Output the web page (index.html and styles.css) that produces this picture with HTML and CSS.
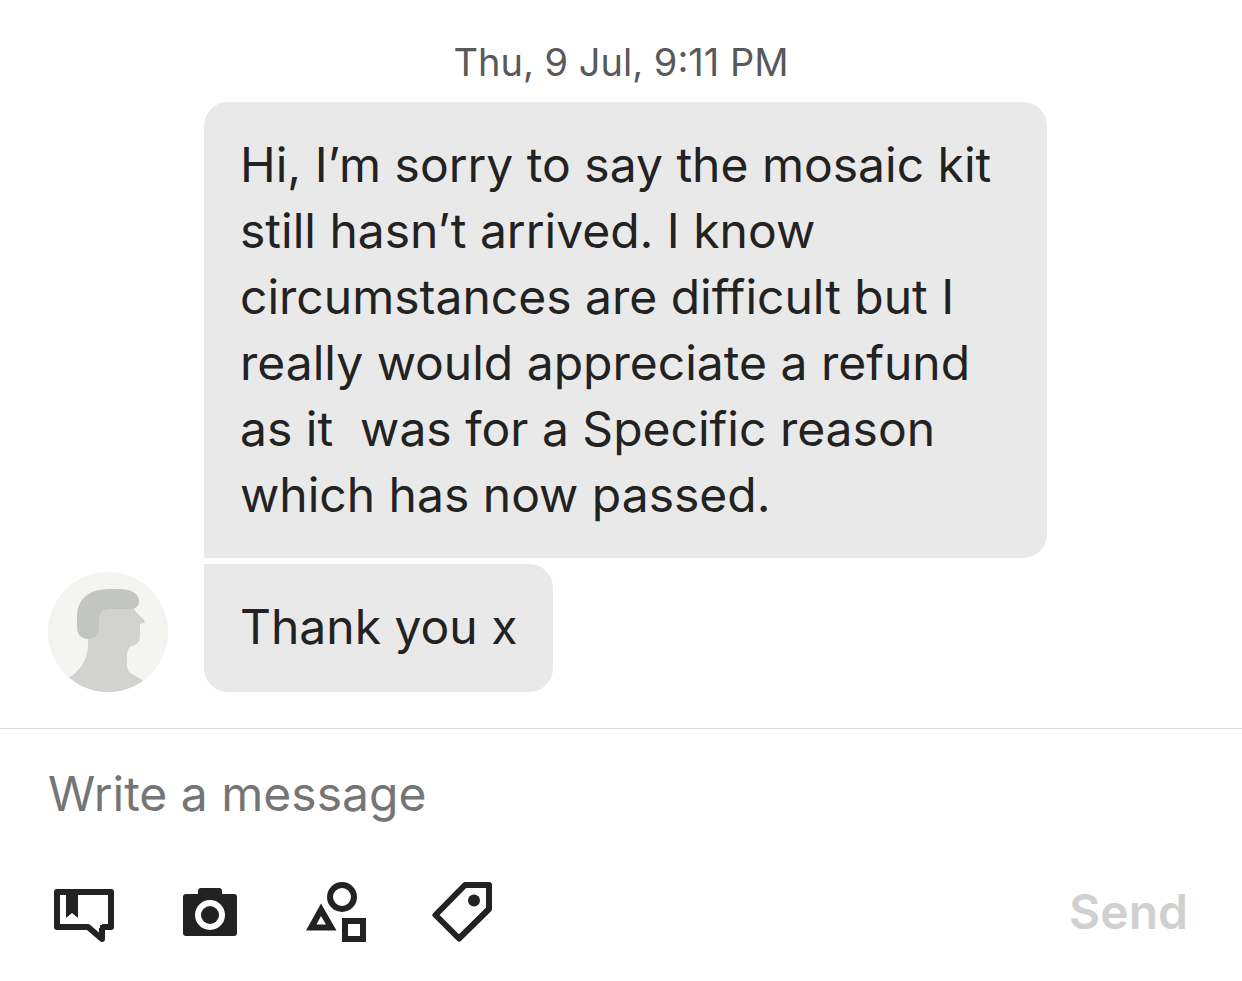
FILE: index.html
```html
<!DOCTYPE html>
<html lang="en">
<head>
<meta charset="utf-8">
<meta name="viewport" content="width=device-width, initial-scale=1">
<title>Conversation</title>
<link rel="stylesheet" href="styles.css">
</head>
<body>
<main class="thread">
  <time class="date">Thu, 9 Jul, 9:11 PM</time>
  <div class="group">
    <svg class="avatar" viewBox="0 0 120 120" role="img" aria-label="Sender">
      <defs><clipPath id="disc"><circle cx="60" cy="60" r="60"/></clipPath></defs>
      <g clip-path="url(#disc)">
        <rect width="120" height="120" fill="#f4f5f1"/>
        <path fill="#d2d3d1" d="M40 36H86Q87 40 90 42L96 48Q98 51 95 51L92 52V64Q92 73 83 74Q79 77 79 84V94Q79 99 84 102L96 109V120H22V105Q40 93 40 72Z"/>
        <path fill="#c3c5c0" d="M61 17H72C84 17 91 22 91 29C91 35 87 37 82 37H62C53 37 51 42 51 48V56C51 63 46 67 40 67C33 67 29 62 29 55V45C29 28 40 17 61 17Z"/>
      </g>
    </svg>
    <div class="bubbles">
      <p class="bubble">Hi, I’m sorry to say the mosaic kit still hasn’t arrived. I know circumstances are difficult but I really would appreciate a refund as it  was for a Specific reason which has now passed.</p>
      <p class="bubble bubble-last">Thank you x</p>
    </div>
  </div>
</main>
<form class="composer">
  <input class="message" type="text" placeholder="Write a message" aria-label="Write a message">
  <div class="toolbar">
    <button class="tool" type="button" aria-label="Saved replies">
      <svg class="icon" viewBox="0 0 72 72"><path d="M9 16H63V51H54V63L40 51H9Z" fill="none" stroke="currentColor" stroke-width="6" stroke-linejoin="round"/><path d="M18 16H30V42L24 37L18 42Z" fill="currentColor"/><path d="M51 47H54V49H52V52H51Z" fill="#fff"/></svg>
    </button>
    <button class="tool" type="button" aria-label="Add photo">
      <svg class="icon" viewBox="0 0 72 72"><path fill="currentColor" fill-rule="evenodd" d="M27 12H45Q48 12 48 15V18H60Q63 18 63 21V57Q63 60 60 60H12Q9 60 9 57V21Q9 18 12 18H24V15Q24 12 27 12ZM36 24A15 15 0 1 0 36 54A15 15 0 1 0 36 24Z"/><circle cx="36" cy="39" r="9" fill="currentColor"/></svg>
    </button>
    <button class="tool" type="button" aria-label="Add listing">
      <svg class="icon" viewBox="0 0 72 72"><g fill="none" stroke="currentColor" stroke-width="6"><circle cx="42" cy="21" r="12"/><rect x="45" y="45" width="18" height="18"/></g><path fill="currentColor" fill-rule="evenodd" d="M21 27.500L36.500 54.500H6ZM21 40L16.500 48.500H26Z"/></svg>
    </button>
    <button class="tool" type="button" aria-label="Add coupon">
      <svg class="icon" viewBox="0 0 72 72"><path d="M39 9H63V33L33 62.500L9.500 39Z" fill="none" stroke="currentColor" stroke-width="6" stroke-linejoin="round"/><circle cx="48" cy="24.500" r="6" fill="currentColor"/></svg>
    </button>
    <button class="send" type="submit" disabled>Send</button>
  </div>
</form>
</body>
</html>
```
FILE: styles.css
```css
* {
  box-sizing: border-box;
}

body {
  margin: 0;
  background: #fff;
  color: #222;
  font-family: Inter, "Liberation Sans", sans-serif;
  font-size: 48px;
  line-height: 66px;
}

.thread {
  padding: 32px 48px 36px;
}

.date {
  display: block;
  margin-bottom: 10px;
  color: #595959;
  font-size: 38px;
  line-height: 60px;
  text-align: center;
}

.group {
  display: flex;
  align-items: flex-end;
  gap: 36px;
}

.avatar {
  flex: none;
  width: 120px;
  height: 120px;
}

.bubbles {
  display: flex;
  flex-direction: column;
  align-items: flex-start;
  gap: 6px;
}

.bubble {
  max-width: 843px;
  min-height: 128px;
  margin: 0;
  padding: 30px 36px;
  border-radius: 24px 24px 24px 0;
  background: #e9e9e9;
  white-space: pre-wrap;
}

.bubble:first-child {
  border-radius: 24px 24px 24px 0;
}

.bubble-last {
  border-radius: 0 24px 24px 24px;
}

.composer {
  padding: 32px 48px;
  border-top: 1px solid #dcdcdc;
}

.message {
  display: block;
  width: 100%;
  height: 66px;
  padding: 0;
  border: 0;
  outline: 0;
  background: transparent;
  color: inherit;
  font: inherit;
}

.message::placeholder {
  color: #757575;
  opacity: 1;
}

.toolbar {
  display: flex;
  align-items: center;
  gap: 54px;
  margin-top: 49px;
}

.tool {
  padding: 0;
  border: 0;
  background: none;
  color: #222;
}

.icon {
  display: block;
  width: 72px;
  height: 72px;
}

.send {
  margin-left: auto;
  padding: 0 6px;
  border: 0;
  background: none;
  color: #d0d0d0;
  font: inherit;
  font-weight: 600;
}
```
